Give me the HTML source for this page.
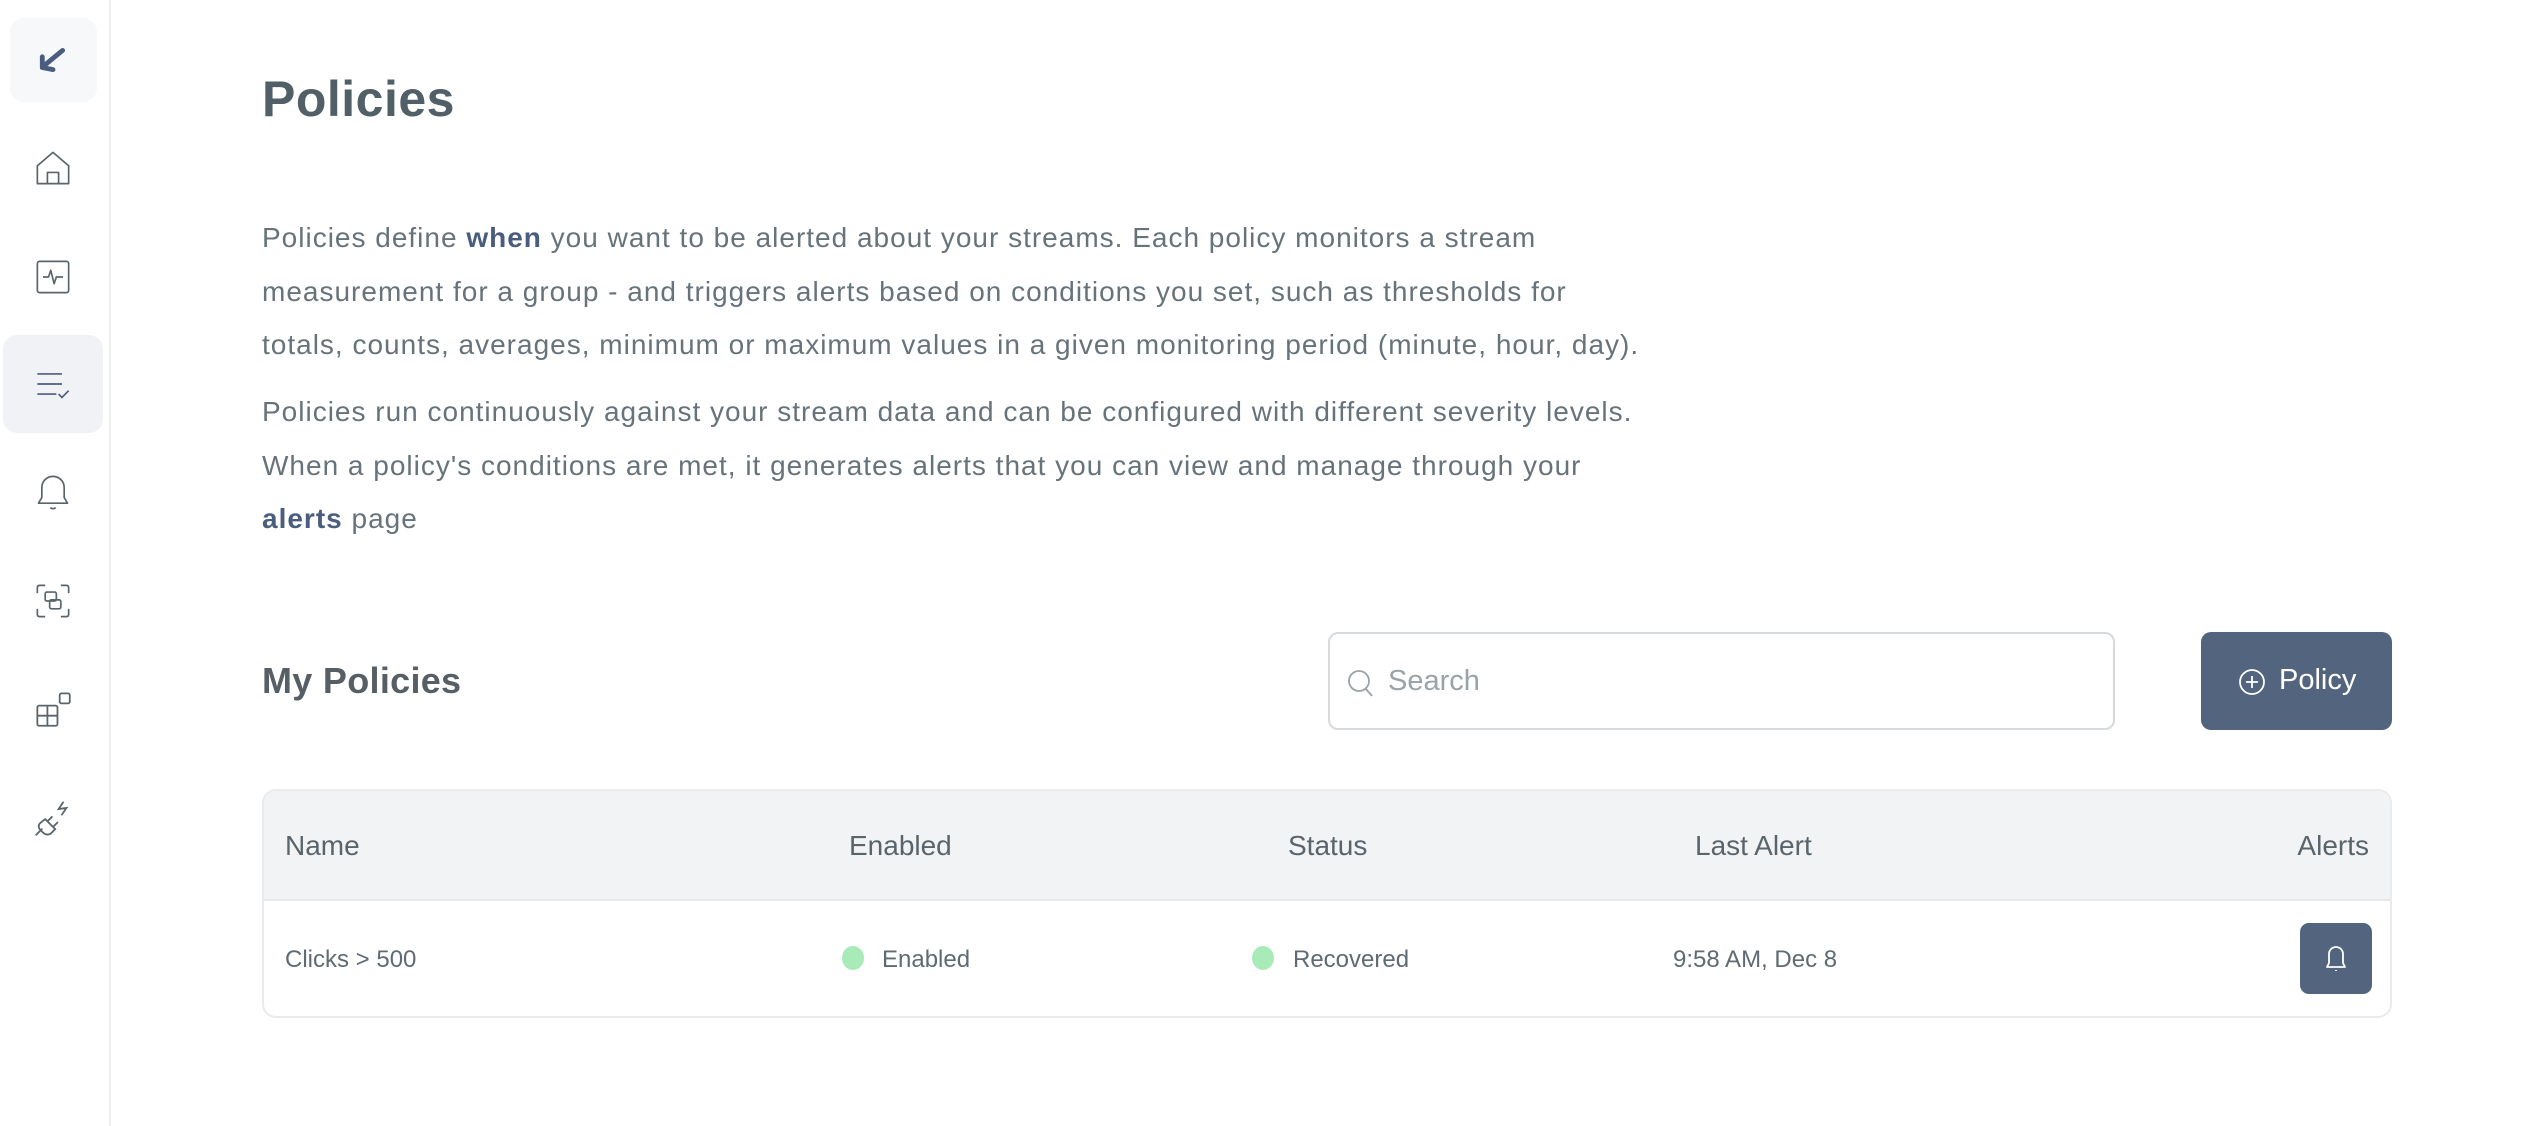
<!DOCTYPE html>
<html><head><meta charset="utf-8"><style>
*{box-sizing:border-box;margin:0;padding:0}
html,body{width:2536px;height:1126px;background:#fff;overflow:hidden;font-family:"Liberation Sans",sans-serif;color:#5f6b72}
.side{position:absolute;left:0;top:0;width:111px;height:1126px;border-right:2px solid #eceef0}
.logo{position:absolute;left:10px;top:18px;width:87px;height:84px;border-radius:14px;background:#f7f8fa}
.act{position:absolute;left:3px;top:335px;width:100px;height:98px;border-radius:14px;background:#f1f2f5}
.ic{position:absolute;left:34px;width:38px;height:38px}
h1{position:absolute;left:262px;top:70px;font-size:50px;font-weight:bold;color:#515f66;letter-spacing:0.5px}
.p{position:absolute;left:262px;font-size:28px;line-height:53.5px;color:#67737a;letter-spacing:1px;white-space:nowrap}
.p b{color:#4b5d7e;font-weight:bold}
h2{position:absolute;left:262px;top:660px;font-size:36px;font-weight:bold;color:#565f66;letter-spacing:0.3px}
.search{position:absolute;left:1328px;top:632px;width:787px;height:98px;border:2px solid #d6dadd;border-radius:10px}
.search span{position:absolute;left:58px;top:31px;font-size:29px;color:#9aa3a8}
.btn{position:absolute;left:2201px;top:632px;width:191px;height:98px;border-radius:10px;background:#53657e;color:#fff;font-size:29px}
.tbl{position:absolute;left:262px;top:789px;width:2130px;height:229px;border:2px solid #e9ebed;border-radius:14px;overflow:hidden}
.th{position:absolute;left:0;top:0;width:100%;height:110px;background:#f2f3f5;border-bottom:2px solid #e6e8ea}
.t{position:absolute;font-size:28px;color:#5a656b;white-space:nowrap}
.r{position:absolute;font-size:24px;color:#5f6b72;white-space:nowrap}
.dot{position:absolute;width:22px;height:24px;border-radius:50%;background:#a8ebb9}
.bell{position:absolute;left:2036px;top:132px;width:72px;height:71px;border-radius:9px;background:#53657e}
</style></head><body>
<div class="side">
 <div class="logo"><svg style="position:absolute;left:28px;top:29px" width="30" height="26" viewBox="0 0 28 24"><path d="M23 3 L6 17 M4 9 L4 19 L14 21" stroke="#4b5d7e" stroke-width="4.5" fill="none" stroke-linecap="round" stroke-linejoin="round"/></svg></div>
 <div class="act"></div>
 <svg class="ic" style="top:149px" viewBox="0 0 34 34" fill="none" stroke="#5a656b" stroke-width="1.5" stroke-linejoin="round"><path d="M3 15 L17 3 L31 15 V31 H3 Z"/><path d="M12 31 V21 H22 V31"/></svg>
 <svg class="ic" style="top:258px" viewBox="0 0 34 34" fill="none" stroke="#5a656b" stroke-width="1.5" stroke-linejoin="round"><rect x="3" y="3" width="28" height="28" rx="2"/><path d="M8 17 H13 L15 11 L18 23 L20 17 H26"/></svg>
 <svg class="ic" style="top:365px" viewBox="0 0 34 34" fill="none" stroke="#4b5d7e" stroke-width="1.5"><path d="M3 8 H25 M3 17 H25 M3 26 H20 M22 26 L25 29 L31 23"/></svg>
 <svg class="ic" style="top:473px" viewBox="0 0 34 34" fill="none" stroke="#5a656b" stroke-width="1.5" stroke-linejoin="round"><path d="M4 27 H30 L27 22 V13 A10 10 0 0 0 7 13 V22 Z"/><path d="M14.5 31 Q17 33 19.5 31"/></svg>
 <svg class="ic" style="top:582px" viewBox="0 0 34 34" fill="none" stroke="#5a656b" stroke-width="1.5"><path d="M3 10 V5 Q3 3 5 3 H10 M24 3 H29 Q31 3 31 5 V10 M31 24 V29 Q31 31 29 31 H24 M10 31 H5 Q3 31 3 29 V24"/><rect x="10" y="9" width="10" height="8" rx="1.5"/><rect x="14" y="16" width="10" height="8" rx="1.5"/></svg>
 <svg class="ic" style="top:690px" viewBox="0 0 34 34" fill="none" stroke="#5a656b" stroke-width="1.6"><rect x="3" y="14" width="18" height="18" rx="1.5"/><path d="M3 23 H21 M12 14 V32"/><rect x="23" y="3" width="9" height="9" rx="1.5"/></svg>
 <svg class="ic" style="top:799px" viewBox="0 0 34 34" fill="none" stroke="#5a656b" stroke-width="1.6" stroke-linecap="round"><path d="M2 32 L7 27 M10 18 L19 27 L15 31 Q11 33 8 30 L6 28 Q3 25 5 22 Z M12 20 L16 16 M17 25 L21 21 M26 3 L22 9 L29 8 L25 14"/></svg>
</div>
<h1>Policies</h1>
<div class="p" style="top:211px">Policies define <b>when</b> you want to be alerted about your streams. Each policy monitors a stream<br>measurement for a group - and triggers alerts based on conditions you set, such as thresholds for<br>totals, counts, averages, minimum or maximum values in a given monitoring period (minute, hour, day).</div>
<div class="p" style="top:385px">Policies run continuously against your stream data and can be configured with different severity levels.<br>When a policy's conditions are met, it generates alerts that you can view and manage through your<br><b>alerts</b> page</div>
<h2>My Policies</h2>
<div class="search"><svg style="position:absolute;left:16px;top:34px" width="30" height="32" viewBox="0 0 30 32" fill="none" stroke="#9aa3a8" stroke-width="1.8"><circle cx="13" cy="13" r="10"/><path d="M20 21 L26 28"/></svg><span>Search</span></div>
<div class="btn"><svg style="position:absolute;left:36px;top:35px" width="30" height="30" viewBox="0 0 30 30" fill="none" stroke="#fff" stroke-width="1.8"><circle cx="15" cy="15" r="12"/><path d="M15 9 V21 M9 15 H21"/></svg><span style="position:absolute;left:78px;top:32px">Policy</span></div>
<div class="tbl">
 <div class="th"></div>
 <div class="t" style="left:21px;top:39px">Name</div>
 <div class="t" style="left:585px;top:39px">Enabled</div>
 <div class="t" style="left:1024px;top:39px">Status</div>
 <div class="t" style="left:1431px;top:39px">Last Alert</div>
 <div class="t" style="right:21px;top:39px">Alerts</div>
 <div class="r" style="left:21px;top:155px">Clicks &gt; 500</div>
 <div class="dot" style="left:578px;top:155px"></div>
 <div class="r" style="left:618px;top:155px">Enabled</div>
 <div class="dot" style="left:988px;top:155px"></div>
 <div class="r" style="left:1029px;top:155px">Recovered</div>
 <div class="r" style="left:1409px;top:155px">9:58 AM, Dec 8</div>
 <div class="bell"><svg style="position:absolute;left:24px;top:21px" width="24" height="30" viewBox="0 0 24 30" fill="none" stroke="#fff" stroke-width="1.8" stroke-linejoin="round"><path d="M3 23 H21 L19 19 V10 A7 7 0 0 0 5 10 V19 Z"/><path d="M12 26 V27"/></svg></div>
</div>
</body></html>
